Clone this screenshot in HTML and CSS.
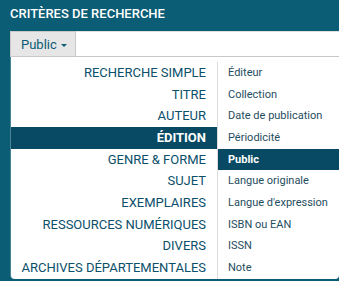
FILE: index.html
```html
<!DOCTYPE html>
<html lang="fr">
<head>
<meta charset="utf-8">
<link rel="stylesheet" href="styles.css">
</head>
<body>
<div class="header">CRITÈRES DE RECHERCHE</div>
<div class="search">
  <div class="btn">Public<span class="caret"></span></div>
  <div class="input"></div>
</div>
<div class="dropdown">
  <ul class="left">
    <li>RECHERCHE SIMPLE</li>
    <li>TITRE</li>
    <li>AUTEUR</li>
    <li class="active">ÉDITION</li>
    <li>GENRE &amp; FORME</li>
    <li>SUJET</li>
    <li>EXEMPLAIRES</li>
    <li>RESSOURCES NUMÉRIQUES</li>
    <li>DIVERS</li>
    <li>ARCHIVES DÉPARTEMENTALES</li>
  </ul>
  <ul class="right">
    <li>Éditeur</li>
    <li>Collection</li>
    <li>Date de publication</li>
    <li>Périodicité</li>
    <li class="active">Public</li>
    <li>Langue originale</li>
    <li>Langue d'expression</li>
    <li>ISBN ou EAN</li>
    <li>ISSN</li>
    <li>Note</li>
  </ul>
</div>
</body>
</html>
```
FILE: styles.css
```css
html, body {
  margin: 0;
  padding: 0;
  background: #0b5c75;
  font-family: Roboto, "Liberation Sans", sans-serif;
  overflow: hidden;
  height: 281px;
}
.header {
  color: #fff;
  font-size: 13px;
  font-weight: 500;
  height: 31px;
  line-height: 28px;
  padding-left: 10px;
  box-sizing: border-box;
}
.search {
  display: flex;
  height: 26px;
  margin-left: 10px;
}
.btn {
  width: 66px;
  box-sizing: border-box;
  background: #e6e6e6;
  border: 1px solid #c9c9c9;
  color: #0b5c75;
  font-size: 13px;
  display: flex;
  align-items: center;
  padding-left: 10px;
}
.caret {
  display: inline-block;
  width: 0;
  height: 0;
  border-left: 3px solid transparent;
  border-right: 3px solid transparent;
  border-top: 3px solid #0b5c75;
  margin-left: 4px;
  margin-top: 2px;
}
.input {
  flex: 1;
  background: #fff;
  border-top: 1px solid #e0e0e0;
  border-bottom: 1px solid #c8c8c8;
}
.dropdown {
  display: flex;
  margin-left: 11px;
  margin-top: 0;
  background: #fff;
  padding-top: 5px;
  border-radius: 0 0 4px 4px;
  box-shadow: -1px 0 0 rgba(255,255,255,0.25);
}
.dropdown ul {
  list-style: none;
  margin: 0;
  padding: 0;
}
.left {
  width: 206px;
  border-right: 1px solid #dcdcdc;
  text-align: right;
  color: #0b4f6a;
  font-size: 13px;
}
.left li {
  height: 21.67px;
  line-height: 21.67px;
  padding-right: 11px;
}
.right {
  flex: 1;
  margin-left: 1px;
  color: #1f4d60;
  font-size: 11px;
}
.right li {
  height: 21.67px;
  line-height: 21.67px;
  padding-left: 10px;
}
li.active {
  background: #084a63;
  color: #fff;
  font-weight: 700;
}
```
